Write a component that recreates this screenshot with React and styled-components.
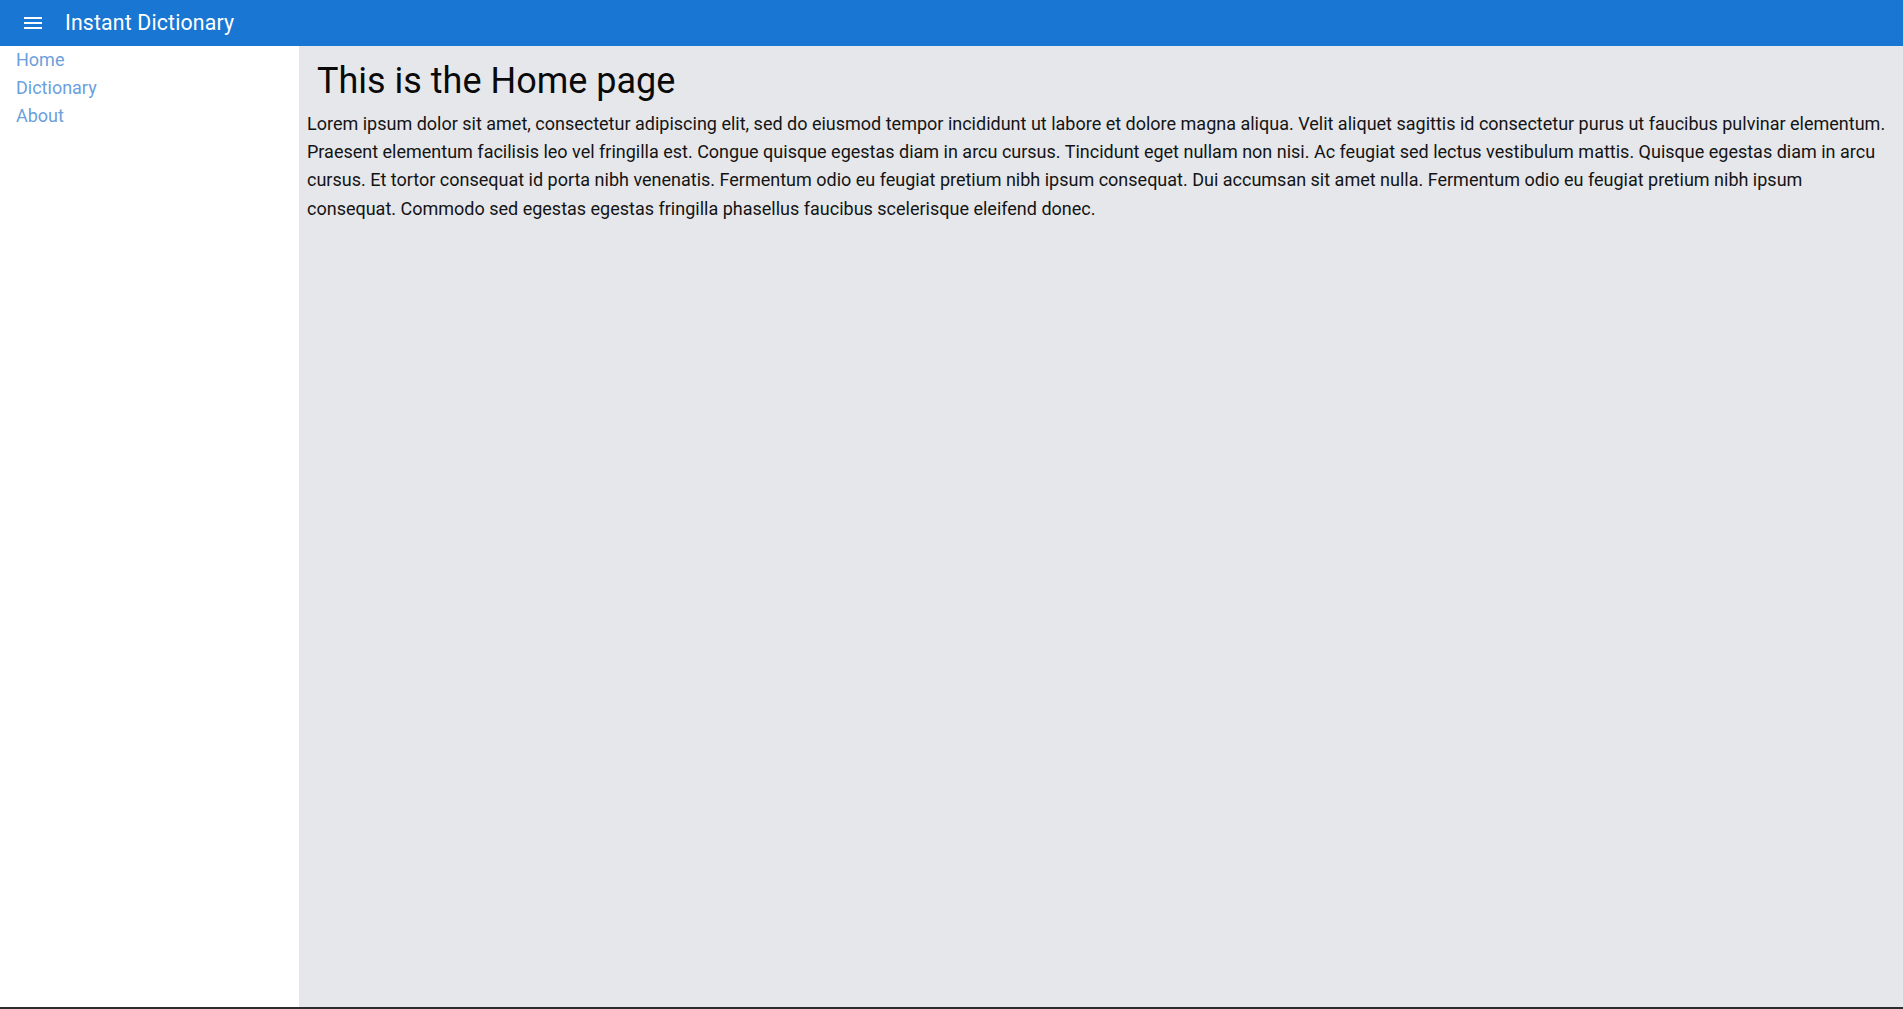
import React from "react";
import styled, { createGlobalStyle } from "styled-components";

const Global = createGlobalStyle`
  html, body { margin: 0; padding: 0; }
  body {
    background: #2d2d2d;
    font-family: Roboto, "Noto Sans", "Liberation Sans", sans-serif;
  }
`;

const Shell = styled.div`
  height: calc(100vh - 2px);
  display: flex;
  flex-direction: column;
  overflow: hidden;
`;

const TopBar = styled.header`
  height: 46px;
  flex: none;
  background: #1976d2;
  color: #fff;
  display: flex;
  align-items: center;
  padding-left: 21px;
  box-sizing: border-box;
`;

const MenuButton = styled.button`
  width: 24px;
  height: 24px;
  padding: 0;
  margin: 0 20px 0 0;
  border: none;
  background: transparent;
  color: #fff;
  display: flex;
  align-items: center;
  justify-content: center;
  cursor: pointer;
`;

const Title = styled.h1`
  margin: 0;
  font-size: 21.3px;
  font-weight: 400;
  letter-spacing: 0.15px;
  line-height: 1.6;
`;

const Body = styled.div`
  flex: 1;
  display: flex;
  min-height: 0;
`;

const Sidebar = styled.nav`
  width: 299px;
  flex: none;
  background: #fff;
  display: flex;
  flex-direction: column;
  padding-left: 16px;
  box-sizing: border-box;
`;

const NavLink = styled.a`
  font-size: 18px;
  line-height: 28px;
  color: #6c9fdd;
  text-decoration: none;
`;

const Main = styled.main`
  flex: 1;
  background: #e5e7eb;
  padding: 14px 8px 0 8px;
  box-sizing: border-box;
`;

const Heading = styled.h2`
  margin: 0 0 8px 10px;
  font-size: 36px;
  font-weight: 400;
  line-height: 42px;
  color: #0a0a0a;
`;

const Paragraph = styled.p`
  margin: 0;
  font-size: 18px;
  line-height: 28.2px;
  color: #141414;
`;

const MenuIcon = () => (
  <svg width="24" height="24" viewBox="0 0 24 24" fill="currentColor">
    <path d="M3 18h18v-2H3v2zm0-5h18v-2H3v2zm0-7v2h18V6H3z" />
  </svg>
);

const text =
  "Lorem ipsum dolor sit amet, consectetur adipiscing elit, sed do eiusmod tempor incididunt ut labore et dolore magna aliqua. Velit aliquet sagittis id consectetur purus ut faucibus pulvinar elementum. Praesent elementum facilisis leo vel fringilla est. Congue quisque egestas diam in arcu cursus. Tincidunt eget nullam non nisi. Ac feugiat sed lectus vestibulum mattis. Quisque egestas diam in arcu cursus. Et tortor consequat id porta nibh venenatis. Fermentum odio eu feugiat pretium nibh ipsum consequat. Dui accumsan sit amet nulla. Fermentum odio eu feugiat pretium nibh ipsum consequat. Commodo sed egestas egestas fringilla phasellus faucibus scelerisque eleifend donec.";

export default function App() {
  return (
    <>
      <Global />
      <Shell>
        <TopBar>
          <MenuButton aria-label="menu">
            <MenuIcon />
          </MenuButton>
          <Title>Instant Dictionary</Title>
        </TopBar>
        <Body>
          <Sidebar>
            <NavLink href="#">Home</NavLink>
            <NavLink href="#">Dictionary</NavLink>
            <NavLink href="#">About</NavLink>
          </Sidebar>
          <Main>
            <Heading>This is the Home page</Heading>
            <Paragraph>{text}</Paragraph>
          </Main>
        </Body>
      </Shell>
    </>
  );
}
